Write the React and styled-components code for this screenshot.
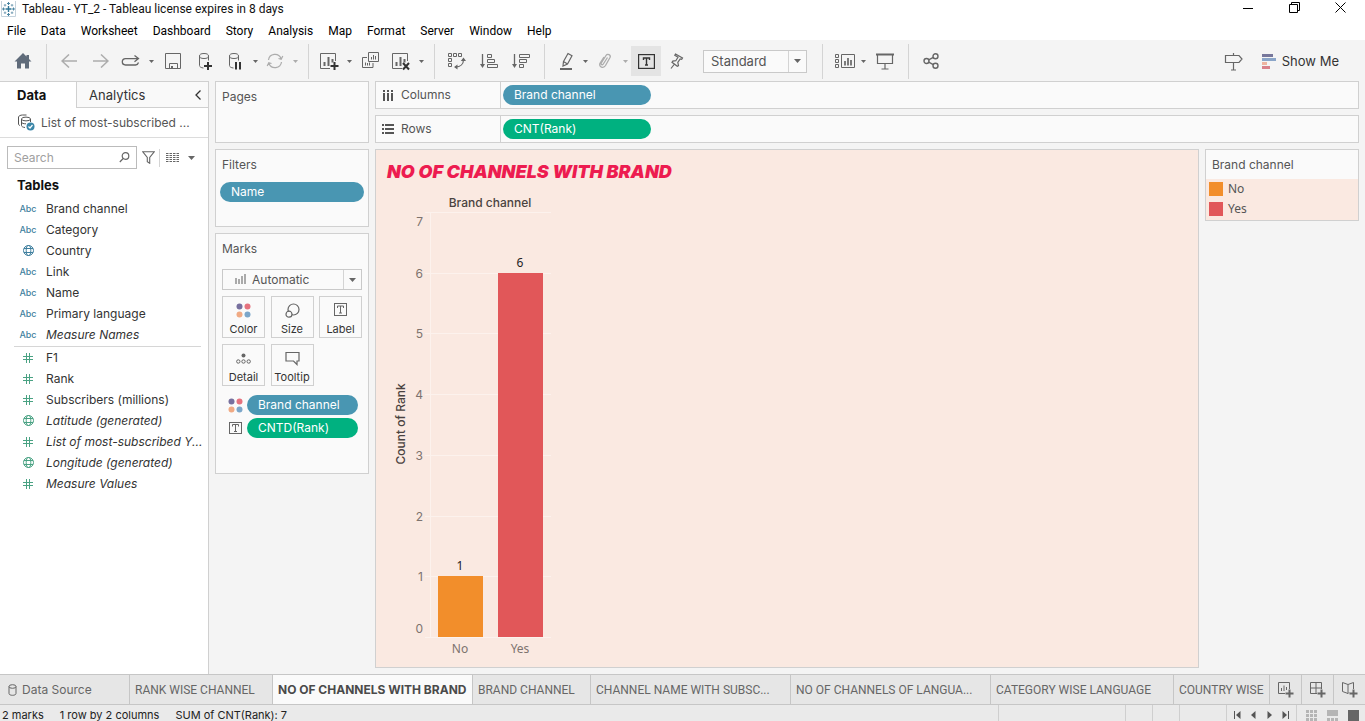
import React from 'react';
import styled, { createGlobalStyle, css } from 'styled-components';

const sans = '"Inter", "Liberation Sans", sans-serif';
const uiSans = '"Noto Sans", "Open Sans", sans-serif';
const chromeSans = '"Roboto", "Liberation Sans", sans-serif';

const Global = createGlobalStyle`
  *, *::before, *::after { box-sizing: border-box; }
  html, body { margin: 0; padding: 0; }
  body { background: #f4f4f4; color: #333; font: 12px/16px ${sans}; overflow: hidden; }
  button, input, select { font: inherit; color: inherit; margin: 0; }
  button { border: 0; padding: 0; background: none; cursor: pointer; }
  svg { display: block; flex: none; }
`;

const Page = styled.div`
  display: flex;
  flex-direction: column;
  height: 100vh;
`;

/* ---------- title bar and menu ---------- */
const TitleBar = styled.header`
  display: flex;
  align-items: center;
  gap: 6px;
  height: 18px;
  flex: none;
  padding: 0 2px 0 1px;
  background: #fff;
  color: #111;
  font: 12px/18px ${chromeSans};
`;
const WindowButtons = styled.div`
  display: flex;
  align-self: flex-start;
  margin-left: auto;
  button { width: 46px; height: 15px; display: flex; align-items: center; justify-content: center; }
`;
const MenuBar = styled.nav`
  display: flex;
  gap: 15px;
  align-items: center;
  height: 22px;
  flex: none;
  padding: 4px 7px 0;
  background: #fff;
  color: #000;
  font: 12px/16px ${chromeSans};
`;

/* ---------- toolbar ---------- */
const ToolBar = styled.div`
  display: flex;
  align-items: center;
  height: 41px;
  flex: none;
  padding: 1px 26px 0 0;
  background: #f4f4f4;
`;
const Group = styled.div`
  display: flex;
  align-items: center;
  height: 35px;
  padding: 0 ${p => p.$end ?? 7}px 0 ${p => p.$start ?? 6}px;
  border-right: ${p => (p.$last ? 0 : '1px solid #d4d4d4')};
`;
const ToolButton = styled.button`
  display: flex;
  align-items: center;
  justify-content: center;
  width: ${p => p.$w ?? 32}px;
  height: 30px;
  color: ${p => (p.$on ? '#333' : '#666')};
  opacity: ${p => (p.disabled ? 0.5 : 1)};
  background: ${p => (p.$on ? '#e4e4e4' : 'none')};
`;
const ShowMe = styled.button`
  display: flex;
  align-items: center;
  gap: 6px;
  color: #333;
  font-size: 13px;
`;
const Spacer = styled.div`flex: 1;`;

const SelectBox = styled.div`
  display: flex;
  align-items: center;
  width: ${p => p.$w ?? '100%'};
  height: ${p => p.$h}px;
  margin-left: ${p => p.$ml ?? 0}px;
  border: 1px solid #c9c9c9;
  background: #fafafa;
  color: #555;
  font-size: ${p => p.$size ?? 12}px;
  select {
    flex: 1;
    min-width: 0;
    height: 100%;
    appearance: none;
    border: 0;
    outline: 0;
    background: none;
    padding: 0 0 0 7px;
  }
`;
const SelectLead = styled.span`
  display: flex;
  padding-left: 12px;
`;
const SelectCaret = styled.span`
  display: flex;
  align-items: center;
  justify-content: center;
  width: 18px;
  height: 100%;
  border-left: 1px solid #d4d4d4;
  pointer-events: none;
`;

/* ---------- body ---------- */
const Body = styled.div`
  display: flex;
  flex: 1;
  min-height: 0;
  gap: 6px;
  padding-right: 6px;
`;
const SidePane = styled.aside`
  width: 209px;
  flex: none;
  background: #fff;
  border-right: 1px solid #d0d0d0;
`;
const PaneTabs = styled.div`
  display: flex;
  height: 27px;
  border-top: 1px solid #d0d0d0;
  font-size: 13px;
`;
const PaneTab = styled.button`
  display: flex;
  align-items: center;
  color: ${p => (p.$active ? '#111' : '#333')};
  font-weight: ${p => (p.$active ? 700 : 400)};
  ${p => p.$active
    ? css`width: 76px; padding-left: 17px;`
    : css`
      flex: 1;
      padding: 0 7px 0 12px;
      justify-content: space-between;
      background: #f9f9f9;
      border-left: 1px solid #d0d0d0;
      border-bottom: 1px solid #d0d0d0;
    `}
`;
const SourceRow = styled.div`
  display: flex;
  align-items: center;
  gap: 6px;
  height: 30px;
  padding: 0 17px;
  border-bottom: 1px solid #dcdcdc;
  color: #555;
  white-space: nowrap;
`;
const SearchRow = styled.div`
  display: flex;
  align-items: center;
  height: 23px;
  margin: 8px 7px 0;
  color: #666;
`;
const SearchBox = styled.label`
  display: flex;
  align-items: center;
  width: 130px;
  height: 23px;
  padding-right: 6px;
  border: 1px solid #bbb;
  input {
    flex: 1;
    min-width: 0;
    border: 0;
    outline: 0;
    padding: 0 6px;
    background: none;
  }
  input::placeholder { color: #a0a0a0; opacity: 1; }
`;
const FilterButton = styled.button`
  display: flex;
  justify-content: center;
  width: 22px;
`;
const ViewButton = styled.button`
  display: flex;
  align-items: center;
  gap: 9px;
  height: 18px;
  padding-left: 6px;
  border-left: 1px solid #d4d4d4;
`;
const TablesTitle = styled.h2`
  margin: 6px 17px 2px;
  font-size: 13px;
  line-height: 21px;
  font-weight: 700;
  color: #111;
`;
const FieldList = styled.ul`
  list-style: none;
  margin: 0 7px 0 14px;
  padding: 0 0 1px;
  border-bottom: ${p => (p.$measures ? 0 : '1px solid #d6d6d6')};
`;
const Field = styled.li`
  display: flex;
  align-items: center;
  height: 21px;
  color: #333;
  white-space: nowrap;
  font-style: ${p => (p.$italic ? 'italic' : 'normal')};
`;
const FieldIcon = styled.span`
  display: flex;
  justify-content: center;
  flex: none;
  width: 28px;
  margin-right: 4px;
  color: ${p => (p.$green ? '#4aa283' : '#3f7f9e')};
  font-size: 9px;
  font-weight: 500;
  font-style: normal;
`;

const Cards = styled.div`
  display: flex;
  flex-direction: column;
  gap: 6px;
  width: 154px;
  flex: none;
`;
const Card = styled.section`
  min-height: ${p => p.$h}px;
  padding: 0 ${p => p.$pad ?? 6}px;
  border: 1px solid #d0d0d0;
  background: #fafafa;
`;
const CardTitle = styled.h3`
  margin: 0;
  padding: 7px 0 0 ${p => p.$indent ?? 0}px;
  font-size: 12px;
  line-height: 16px;
  font-weight: 400;
  color: #555;
`;
const Pill = styled.button`
  width: ${p => p.$w ?? '100%'};
  height: 20px;
  margin-top: ${p => p.$mt ?? 0}px;
  padding: 0 11px;
  border-radius: 10px;
  background: ${p => (p.$green ? '#00b180' : '#4996b2')};
  color: #fff;
  text-align: left;
`;
const MarkType = styled.div`
  margin-top: 12px;
  select { padding-left: 6px; }
`;
const MarkGrid = styled.div`
  display: grid;
  grid-template-columns: repeat(3, 43px);
  grid-auto-rows: 42px;
  justify-content: space-between;
  row-gap: 6px;
  margin: 6px 0 9px;
`;
const MarkButton = styled.button`
  display: flex;
  flex-direction: column;
  align-items: center;
  justify-content: space-between;
  padding: 6px 0 0;
  border: 1px solid #d0d0d0;
  font-size: 11px;
  color: #333;
  svg { color: #666; }
`;
const MarkRow = styled.div`
  display: flex;
  align-items: center;
  gap: 3px;
  height: 20px;
  margin: 0 4px 3px 5px;
`;
const MarkRowIcon = styled.span`
  display: flex;
  justify-content: center;
  flex: none;
  width: 17px;
  color: #666;
`;

const Main = styled.main`
  display: flex;
  flex-direction: column;
  gap: 6px;
  flex: 1;
  min-width: 0;
  padding-bottom: 6px;
`;
const Shelf = styled.div`
  display: flex;
  align-items: center;
  height: 28px;
  flex: none;
  border: 1px solid #d0d0d0;
  background: #fafafa;
`;
const ShelfName = styled.div`
  display: flex;
  align-items: center;
  gap: 7px;
  width: 125px;
  height: 100%;
  margin-right: 2px;
  padding-left: 6px;
  border-right: 1px solid #d0d0d0;
  color: #555;
`;
const SheetRow = styled.div`
  display: flex;
  align-items: flex-start;
  gap: 6px;
  flex: 1;
  min-height: 0;
`;
const Sheet = styled.section`
  flex: 1;
  align-self: stretch;
  padding: 10px 11px;
  border: 1px solid #d0d0d0;
  background: #fae9e1;
`;
const SheetTitle = styled.h1`
  margin: 0 0 6px;
  font: italic 900 18px/24px ${sans};
  color: #ed1c50;
`;
const Legend = styled.section`
  width: 154px;
  flex: none;
  padding-bottom: 1px;
  border: 1px solid #d0d0d0;
  background: #fae9e1;
`;
const LegendTitle = styled.h3`
  margin: 0;
  padding: 0 6px;
  background: #fafafa;
  color: #555;
  font-weight: 400;
  font-size: 12px;
  line-height: 29px;
`;
const LegendItem = styled.div`
  display: flex;
  align-items: center;
  gap: 5px;
  height: 20px;
  padding-left: 3px;
  color: #555;
  font-family: ${uiSans};
  &::before { content: ''; width: 14px; height: 14px; background: ${p => p.$c}; }
`;

/* ---------- sheet tabs and status bar ---------- */
const TabBar = styled.div`
  display: flex;
  height: 31px;
  flex: none;
  border-top: 1px solid #c6c6c6;
  border-bottom: 1px solid #c6c6c6;
  background: #e6e6e6;
  font-family: ${chromeSans};
`;
const TabScroll = styled.div`
  display: flex;
  flex: 1;
  min-width: 0;
  overflow: hidden;
`;
const SheetTab = styled.button`
  display: flex;
  align-items: center;
  gap: 5px;
  width: ${p => p.$w}px;
  flex: none;
  padding: 0 5px 0 ${p => (p.$source ? 8 : 5)}px;
  border-right: 1px solid #c6c6c6;
  background: ${p => (p.$active ? '#fafafa' : 'none')};
  color: ${p => (p.$active ? '#4a4a4a' : '#666')};
  font-family: ${p => (p.$active || p.$source ? sans : 'inherit')};
  font-weight: ${p => (p.$active ? 700 : 400)};
  white-space: nowrap;
`;
const NewTab = styled.button`
  display: flex;
  align-items: center;
  justify-content: center;
  width: 32px;
  color: #666;
  border-left: 1px solid #c6c6c6;
`;
const StatusBar = styled.footer`
  display: flex;
  height: 16px;
  flex: none;
  background: #eaeaea;
  color: #222;
  font-size: 11px;
  line-height: 20px;
`;
const StatusText = styled.div`
  display: flex;
  gap: 16px;
  flex: 1;
  padding-left: 2px;
  overflow: hidden;
  white-space: nowrap;
`;
const StatusCell = styled.div`
  display: flex;
  align-items: center;
  justify-content: space-between;
  width: ${p => p.$w}px;
  border-left: 1px solid #cfcfcf;
  padding: 4px ${p => p.$end ?? 7}px 0 ${p => p.$start ?? 7}px;
  button { color: ${p => p.$c ?? '#555'}; }
`;

/* ---------- icons ---------- */
const Icon = ({ w = 18, h = 18, sw = 1, children }) => (
  <svg width={w} height={h} viewBox={`0 0 ${w} ${h}`} fill="none" stroke="currentColor" strokeWidth={sw} aria-hidden="true">
    {children}
  </svg>
);
const Caret = () => (
  <svg width="7" height="4" viewBox="0 0 7 4" fill="#666" aria-hidden="true"><path d="M0 0h7L3.5 4z" /></svg>
);
const SmallCaret = () => (
  <svg width="5" height="3" viewBox="0 0 5 3" fill="#666" aria-hidden="true"><path d="M0 0h5L2.5 3z" /></svg>
);
const Plus = ({ x, y }) => <path d={`M${x - 4} ${y}h8M${x} ${y - 4}v8`} stroke="#333" strokeWidth="2" />;

const TableauLogo = () => (
  <Icon w={15} h={16}>
    <path d="M.5 0v15.500h14V0" stroke="#c4d2dc" />
    <path d="M7.500 5v6M4.500 8h6" stroke="#2f7596" strokeWidth="1.400" />
    <path d="M7.500 1v3M6 2.500h3M7.500 12v3M6 13.500h3M2.500 6.500v3M1 8h3M12.500 6.500v3M11 8h3" stroke="#4c86a3" />
    <path d="M4 3v2.500M2.800 4.200h2.500M11 3v2.500M9.800 4.200h2.500M4 10.500V13M2.800 11.800h2.500M11 10.500V13M9.800 11.800h2.500" stroke="#6f9ab1" strokeWidth=".9" />
  </Icon>
);
const HomeIcon = () => (
  <Icon w={18} h={16}>
    <path d="M9 0 .5 8.500h2.500V15.500h4v-5h4v5h4V8.500h2.500L15 6V2h-2.500v1.500z" fill="#5f6b7a" stroke="none" />
  </Icon>
);
const Arrow = ({ right }) => (
  <Icon w={16} h={14} sw={1.5}>
    <path d={right ? 'M0 7h15M8 .5 15 7l-7 6.500' : 'M16 7H1M8 .5 1 7l7 6.500'} />
  </Icon>
);
const RedoIcon = () => (
  <Icon w={20} h={12} sw={1.3}>
    <path d="M13 10H4.500a3.200 3.200 0 0 1 0-6.400H17M13.500.5 17.500 3.600l-4 3.200M13 10h1.500a3.500 3.500 0 0 0 3-2.500" />
  </Icon>
);
const SaveIcon = () => (
  <Icon w={16} h={16}>
    <path d="M.5.5h15v15H.5zM4.500 15.500v-5h8v5" />
    <path d="M6 13h2v2.500H6z" fill="currentColor" stroke="none" />
  </Icon>
);
const DbIcon = ({ pause }) => (
  <Icon w={16} h={19}>
    <ellipse cx="7" cy="4" rx="4.500" ry="2.500" />
    <path d="M2.500 4v9.500c0 1.300 1.500 2.300 4 2.500M11.500 4v4.500" />
    {pause ? <path d="M9 10v7.500M13 10v7.500" stroke="#333" strokeWidth="2" /> : <Plus x={11} y={14} />}
  </Icon>
);
const RefreshIcon = () => (
  <Icon w={18} h={16} sw={1.2}>
    <path d="M2.500 7A6.500 6.500 0 0 1 15 5.500M15.500 9A6.500 6.500 0 0 1 3 10.500M12.500 5.500l2.700.700L16.800 3M5.500 10.500l-2.700-.700L1.200 13" />
  </Icon>
);
const SheetIcon = ({ clear }) => (
  <Icon w={20} h={19}>
    <path d="M11 16.500H1.500v-15h15V9" />
    <path d="M5.500 10v4M9.500 5v9M13.500 7v3.500" strokeWidth="2" />
    {clear ? <path d="m12 11 6 6.500M18 11l-6 6.500" stroke="#333" strokeWidth="2" /> : <Plus x={15.5} y={14} />}
  </Icon>
);
const DuplicateIcon = () => (
  <Icon w={18} h={18}>
    <path d="M6.500.5h10v9h-10zM5 5.500H.5v10h10.500V11" />
    <path d="M9.500 5v2.500M11.500 3v4.500M13.500 4v3.500M3.500 10.500v3M5.500 11v2.500M7.500 10.500v3" />
  </Icon>
);
const SwapIcon = () => (
  <Icon w={18} h={18}>
    <path d="M.5 1.500h3v3h-3zM5.500 1.500h3v3h-3zM10.500 1.500h3v3h-3zM.5 6.500h3v3h-3zM.5 11.500h3v3h-3z" />
    <path d="M15.500 7.500c0 4.500-3 7.500-8 7.500" strokeWidth="1.200" />
    <path d="M12.800 9 15.500 5.500 18 9zM9.500 12.500v5L6 15z" fill="currentColor" stroke="none" />
  </Icon>
);
const SortIcon = ({ desc }) => (
  <Icon w={18} h={16}>
    <path d="M2.500 1v12" strokeWidth="1.300" />
    <path d="M0 11h5l-2.500 4z" fill="currentColor" stroke="none" />
    <path d={desc
      ? 'M7.500 1.500h10v3h-10zM7.500 6.500h7v3h-7zM7.500 11.500h4v3h-4z'
      : 'M7.500 1.500h4v3h-4zM7.500 6.500h7v3h-7zM7.500 11.500h10v3h-10z'} />
  </Icon>
);
const HighlightIcon = () => (
  <Icon w={14} h={19}>
    <path d="m3.500 9.500 4.500-8 4 2.200-4.500 8.300-4.500 2zM3.500 9.500l4 2.500" strokeWidth="1.200" />
    <path d="M0 17h12" strokeWidth="2" />
  </Icon>
);
const ClipIcon = () => (
  <Icon w={14} h={16} sw={1.3}>
    <path d="M9.500 4.500 5.300 11c-.8 1.400-2.800.4-2-1L8 2.500c1.500-2.300 5.200-.5 4 2L7.500 12.500c-2 3.300-7 1.500-5.500-2.200L6 4" />
  </Icon>
);
const LabelIcon = ({ w = 17, h = 15 }) => (
  <Icon w={w} h={h} sw={w > 15 ? 1.4 : 1}>
    <rect x=".5" y=".5" width={w - 1} height={h - 1} />
    <path d={`M${w / 2 - 3} ${h / 2 - 1.5}v-2h6v2M${w / 2} ${h / 2 - 3.5}v7M${w / 2 - 1.5} ${h / 2 + 3.5}h3`} />
  </Icon>
);
const PinIcon = () => (
  <Icon w={14} h={16} sw={1.2}>
    <path d="M5.500 1 12.500 5l-.8 1.300-1.500-.3-2.400 3.500.7 3.200-1.200.6L2 9.300l.8-1.200 3-.4 2.200-3.500L4.800 2.300zM4.500 11 1 15.500" />
  </Icon>
);
const FitIcon = () => (
  <Icon w={20} h={16}>
    <path d="M.5 1.500h3v3h-3zM.5 6.500h3v3h-3zM.5 11.500h3v3h-3zM6.500 1.500h13v13h-13z" />
    <path d="M10 8v4.500M13 5v7.500M16 7v5.500" strokeWidth="1.700" />
  </Icon>
);
const PresentIcon = () => (
  <Icon w={18} h={17}>
    <path d="M0 1.500h18" strokeWidth="2" />
    <path d="M1.500 2v8.500h15V2M9 10.500V16M5.500 16h7" strokeWidth="1.200" />
  </Icon>
);
const ShareIcon = () => (
  <Icon w={16} h={16} sw={1.4}>
    <circle cx="3.500" cy="8" r="2.500" /><circle cx="12.500" cy="3.200" r="2.500" /><circle cx="12.500" cy="12.800" r="2.500" />
    <path d="M5.700 6.800l4.600-2.500M5.700 9.200l4.600 2.500" />
  </Icon>
);
const GuideIcon = () => (
  <Icon w={20} h={19} sw={1.2}>
    <path d="M1.500 3.500h13.500l3 3.500-3 3.500H1.500zM9.500 1v2.500M9.500 10.500V18M7 18h5" />
  </Icon>
);
const ShowMeIcon = () => (
  <svg width="14" height="16" viewBox="0 0 14 16" aria-hidden="true">
    <path d="M0 1h11v3H0z" fill="#77779b" /><path d="M0 5h14v3H0z" fill="#8aa5c8" />
    <path d="M0 9h5v3H0z" fill="#eeb49f" /><path d="M0 13h8v3H0z" fill="#d9818a" />
  </svg>
);
const SourceIcon = () => (
  <Icon w={18} h={17}>
    <ellipse cx="9" cy="5" rx="4.500" ry="1.900" />
    <path d="M4.500 5v6.500c0 1 1.500 1.800 3.500 2M13.500 5v3M4.500 8.300c.5 1 2 1.500 4.500 1.500M1.500 10V3c0-1 2-2 4-2h4M1.500 10c0 .8.500 1.200 1.500 1.500" />
    <circle cx="13.500" cy="12.500" r="4" fill="#3b86a8" stroke="none" />
    <path d="m11.500 12.500 1.500 1.500 2.500-3" stroke="#fff" strokeWidth="1.200" />
  </Icon>
);
const SearchIcon = () => (
  <Icon w={11} h={11} sw={1.2}><circle cx="6.500" cy="4" r="3.300" /><path d="M4.200 6.500.8 10" /></Icon>
);
const FunnelIcon = () => (
  <Icon w={13} h={13} sw={1.1}><path d="M.8.8h11.400L7.700 6.500v5.800l-2.400-1.500V6.500z" /></Icon>
);
const ListIcon = () => (
  <Icon w={13} h={9}>
    <path d="M0 .5h13M0 2.500h13M0 4.500h13M0 6.500h13M0 8.500h13" strokeDasharray="2.500 1" />
  </Icon>
);
const GlobeIcon = () => (
  <Icon w={11} h={11}>
    <circle cx="5.500" cy="5.500" r="5" /><ellipse cx="5.500" cy="5.500" rx="2.300" ry="5" /><path d="M1 3.500h9M1 7.500h9" />
  </Icon>
);
const HashIcon = () => (
  <Icon w={10} h={10}><path d="M3.500 0v10M6.500 0v10M0 3.500h10M0 6.500h10" /></Icon>
);
const ColorIcon = () => (
  <svg width="15" height="15" viewBox="0 0 15 15" aria-hidden="true">
    <circle cx="3.500" cy="3.500" r="3" fill="#77709e" /><circle cx="11.500" cy="3.500" r="3" fill="#e5727e" />
    <circle cx="3.500" cy="11.500" r="3" fill="#f0aa84" /><circle cx="11.500" cy="11.500" r="3" fill="#7ba6c9" />
  </svg>
);
const SizeIcon = () => (
  <Icon w={15} h={15} sw={1.2}><circle cx="8.500" cy="6.500" r="5.500" /><circle cx="4" cy="11.200" r="3" fill="#fafafa" /></Icon>
);
const DetailIcon = () => (
  <Icon w={15} h={15}>
    <circle cx="7.500" cy="4.500" r="2" fill="currentColor" stroke="none" />
    <circle cx="2.300" cy="10.500" r="1.700" /><circle cx="7.500" cy="10.500" r="1.700" /><circle cx="12.700" cy="10.500" r="1.700" />
  </Icon>
);
const TooltipIcon = () => (
  <Icon w={15} h={15} sw={1.2}><path d="M1 1.500h13v8.500h-2v3.500L8.500 10H1z" /></Icon>
);
const BarsIcon = () => (
  <svg width="11" height="11" viewBox="0 0 11 11" fill="#aaa" aria-hidden="true"><path d="M0 4h2v6H0zM3 5h2v5H3zM6 2h2v8H6zM9 0h2v10H9z" /></svg>
);
const ColumnsIcon = () => (
  <svg width="12" height="13" viewBox="0 0 12 13" fill="#555" aria-hidden="true">
    <path d="M1 1h2v2H1zM5 1h2v2H5zM9 1h2v2H9zM1 4h2v8H1zM5 4h2v8H5zM9 4h2v8H9z" />
  </svg>
);
const RowsIcon = () => (
  <svg width="12" height="12" viewBox="0 0 12 12" fill="#555" aria-hidden="true">
    <path d="M0 1h2v2H0zM0 5h2v2H0zM0 9h2v2H0zM3 1h9v2H3zM3 5h9v2H3zM3 9h9v2H3z" />
  </svg>
);
const CylinderIcon = () => (
  <Icon w={9} h={12}><ellipse cx="4.500" cy="2.500" rx="3.500" ry="1.800" /><path d="M1 2.500v7c0 2.400 7 2.400 7 0v-7" /></Icon>
);
const NewSheetIcon = ({ kind }) => (
  <Icon w={17} h={17}>
    {kind === 'sheet' && <><path d="M8 12.500H1.500v-11h11V8" /><path d="M4.500 7v3M7 4.500V10M9.500 6v3" /></>}
    {kind === 'dashboard' && <path d="M8 12.500H1.500v-11h11V8M7 1.500v11M1.500 7h11" />}
    {kind === 'story' && <path d="M8 11.500l-1 1-5.500-2v-9L7 3.500l5.500-2V8M7 3.500v9" />}
    <path d="M8.500 12.500h8M12.500 8.500v8" strokeWidth="2" />
  </Icon>
);

/* ---------- chart ---------- */
const ChartText = styled.text`
  font: ${p => p.$size ?? 12}px ${p => (p.$alt ? uiSans : sans)};
  font-weight: ${p => (p.$medium ? 500 : 400)};
  fill: ${p => p.$c ?? '#7d736e'};
  text-anchor: ${p => p.$anchor ?? 'middle'};
`;
const chart = { left: 43, width: 121, base: 447, top: 22, max: 7 };
const yOf = v => Math.round(chart.base - (v * (chart.base - chart.top)) / chart.max);
const bars = [
  { name: 'No', value: 1, color: '#f28e2b' },
  { name: 'Yes', value: 6, color: '#e15759' },
];
const axisText = v => {
  if (v === 0) return yOf(0) - 4;
  if (v === chart.max) return yOf(v) + 14;
  return yOf(v) + 5;
};
const BarChart = () => (
  <svg width="170" height="470" viewBox="0 0 170 470" role="img" aria-label="Count of Rank by Brand channel">
    <ChartText x="103" y="17" $c="#4a4340" $medium>Brand channel</ChartText>
    <ChartText transform="rotate(-90 18 234)" x="18" y="234" $c="#4a4340" $medium>Count of Rank</ChartText>
    {[0, 1, 2, 3, 4, 5, 6, 7].map(v => (
      <g key={v}>
        <path d={`M${chart.left - 5} ${yOf(v) + 0.5}H${chart.left + chart.width}`} stroke="#fcf2ed" />
        <ChartText x="36" y={axisText(v)} $anchor="end">{v}</ChartText>
      </g>
    ))}
    <path d={`M${chart.left + 0.5} ${chart.top}V${chart.base}`} stroke="#fcf2ed" />
    {bars.map((b, i) => {
      const x = chart.left + 8 + i * 60;
      return (
        <g key={b.name}>
          <rect x={x} y={yOf(b.value)} width="45" height={chart.base - yOf(b.value)} fill={b.color} />
          <ChartText x={x + 22} y={yOf(b.value) - 6} $c="#222" $alt>{b.value}</ChartText>
          <ChartText x={x + 22} y={chart.base + 16} $alt>{b.name}</ChartText>
        </g>
      );
    })}
  </svg>
);

const menus = ['File', 'Data', 'Worksheet', 'Dashboard', 'Story', 'Analysis', 'Map', 'Format', 'Server', 'Window', 'Help'];
const dimensions = [
  ['abc', 'Brand channel'], ['abc', 'Category'], ['geo', 'Country'], ['abc', 'Link'],
  ['abc', 'Name'], ['abc', 'Primary language'], ['abc', 'Measure Names', true],
];
const measures = [
  ['num', 'F1'], ['num', 'Rank'], ['num', 'Subscribers (millions)'], ['geo', 'Latitude (generated)', true],
  ['num', 'List of most-subscribed Y...', true], ['geo', 'Longitude (generated)', true], ['num', 'Measure Values', true],
];
const sheets = [
  ['RANK WISE CHANNEL', 143], ['NO OF CHANNELS WITH BRAND', 200, true], ['BRAND CHANNEL', 118],
  ['CHANNEL NAME WITH SUBSC...', 200], ['NO OF CHANNELS OF LANGUA...', 200],
  ['CATEGORY WISE LANGUAGE', 183], ['COUNTRY WISE', 143],
];

const Fields = ({ items, green }) => (
  <FieldList $measures={green}>
    {items.map(([type, name, italic]) => (
      <Field key={name} $italic={italic}>
        <FieldIcon $green={green}>
          {type === 'abc' ? 'Abc' : type === 'geo' ? <GlobeIcon /> : <HashIcon />}
        </FieldIcon>
        {name}
      </Field>
    ))}
  </FieldList>
);

const Drop = ({ disabled, label }) => (
  <ToolButton $w={12} disabled={disabled} aria-label={label}><SmallCaret /></ToolButton>
);

export default function App() {
  return (
    <Page>
      <Global />
      <TitleBar>
        <TableauLogo />
        <span>Tableau - YT_2 - Tableau license expires in 8 days</span>
        <WindowButtons>
          <button aria-label="Minimize"><Icon w={10} h={10}><path d="M0 5.500h10" stroke="#000" /></Icon></button>
          <button aria-label="Restore"><Icon w={11} h={11}><path d="M.5 2.500h8v8h-8zM2.500 2.500v-2h8v8h-2" stroke="#000" /></Icon></button>
          <button aria-label="Close"><Icon w={11} h={11}><path d="m.5.5 10 10M10.500.5l-10 10" stroke="#000" /></Icon></button>
        </WindowButtons>
      </TitleBar>
      <MenuBar>{menus.map(m => <button key={m}>{m}</button>)}</MenuBar>

      <ToolBar>
        <Group $start={7}><ToolButton aria-label="Start page"><HomeIcon /></ToolButton></Group>
        <Group>
          <ToolButton aria-label="Undo" disabled><Arrow /></ToolButton>
          <ToolButton aria-label="Redo" disabled><Arrow right /></ToolButton>
          <ToolButton $w={28} aria-label="Replay animation"><RedoIcon /></ToolButton>
          <Drop label="Replay speed" />
          <ToolButton aria-label="Save"><SaveIcon /></ToolButton>
          <ToolButton aria-label="New data source"><DbIcon /></ToolButton>
          <ToolButton $w={28} aria-label="Pause auto updates"><DbIcon pause /></ToolButton>
          <Drop label="Update options" />
          <ToolButton $w={28} aria-label="Run update" disabled><RefreshIcon /></ToolButton>
          <Drop label="Run options" disabled />
        </Group>
        <Group>
          <ToolButton $w={28} aria-label="New worksheet"><SheetIcon /></ToolButton>
          <Drop label="New options" />
          <ToolButton aria-label="Duplicate"><DuplicateIcon /></ToolButton>
          <ToolButton $w={28} aria-label="Clear sheet"><SheetIcon clear /></ToolButton>
          <Drop label="Clear options" />
        </Group>
        <Group>
          <ToolButton aria-label="Swap rows and columns"><SwapIcon /></ToolButton>
          <ToolButton aria-label="Sort ascending"><SortIcon /></ToolButton>
          <ToolButton aria-label="Sort descending"><SortIcon desc /></ToolButton>
        </Group>
        <Group $start={10} $end={15}>
          <ToolButton $w={24} aria-label="Highlight"><HighlightIcon /></ToolButton>
          <Drop label="Highlight options" />
          <ToolButton $w={28} aria-label="Group members" disabled><ClipIcon /></ToolButton>
          <Drop label="Group options" disabled />
          <ToolButton $w={30} $on aria-label="Show mark labels"><LabelIcon /></ToolButton>
          <ToolButton aria-label="Fix axes"><PinIcon /></ToolButton>
          <SelectBox $w="104px" $h={23} $ml={10} $size={13}>
            <select aria-label="Fit" defaultValue="Standard"><option>Standard</option><option>Entire View</option></select>
            <SelectCaret><Caret /></SelectCaret>
          </SelectBox>
        </Group>
        <Group $start={10}>
          <ToolButton $w={24} aria-label="Show or hide cards"><FitIcon /></ToolButton>
          <Drop label="Card options" />
          <ToolButton aria-label="Presentation mode"><PresentIcon /></ToolButton>
        </Group>
        <Group $last><ToolButton aria-label="Share"><ShareIcon /></ToolButton></Group>
        <Spacer />
        <ToolButton $w={56} aria-label="Guide"><GuideIcon /></ToolButton>
        <ShowMe><ShowMeIcon />Show Me</ShowMe>
      </ToolBar>

      <Body>
        <SidePane>
          <PaneTabs>
            <PaneTab $active>Data</PaneTab>
            <PaneTab>Analytics<Icon w={6} h={10} sw={1.3}><path d="M5.500.5 1 5l4.500 4.500" /></Icon></PaneTab>
          </PaneTabs>
          <SourceRow><SourceIcon />List of most-subscribed ...</SourceRow>
          <SearchRow>
            <SearchBox><input type="text" placeholder="Search" aria-label="Search" /><SearchIcon /></SearchBox>
            <FilterButton aria-label="Filter fields"><FunnelIcon /></FilterButton>
            <ViewButton aria-label="View options"><ListIcon /><Caret /></ViewButton>
          </SearchRow>
          <TablesTitle>Tables</TablesTitle>
          <Fields items={dimensions} />
          <Fields items={measures} green />
        </SidePane>

        <Cards>
          <Card $h={62}><CardTitle>Pages</CardTitle></Card>
          <Card $h={78} $pad={4}>
            <CardTitle $indent={2}>Filters</CardTitle>
            <Pill $mt={9}>Name</Pill>
          </Card>
          <Card $h={241}>
            <CardTitle>Marks</CardTitle>
            <MarkType>
              <SelectBox $h={21}>
                <SelectLead><BarsIcon /></SelectLead>
                <select aria-label="Mark type" defaultValue="Automatic"><option>Automatic</option><option>Bar</option></select>
                <SelectCaret><Caret /></SelectCaret>
              </SelectBox>
            </MarkType>
            <MarkGrid>
              <MarkButton><ColorIcon />Color</MarkButton>
              <MarkButton><SizeIcon />Size</MarkButton>
              <MarkButton><LabelIcon w={13} h={13} />Label</MarkButton>
              <MarkButton><DetailIcon />Detail</MarkButton>
              <MarkButton><TooltipIcon />Tooltip</MarkButton>
            </MarkGrid>
            <MarkRow><MarkRowIcon><ColorIcon /></MarkRowIcon><Pill>Brand channel</Pill></MarkRow>
            <MarkRow><MarkRowIcon><LabelIcon w={13} h={12} /></MarkRowIcon><Pill $green>CNTD(Rank)</Pill></MarkRow>
          </Card>
        </Cards>

        <Main>
          <Shelf><ShelfName><ColumnsIcon />Columns</ShelfName><Pill $w="148px">Brand channel</Pill></Shelf>
          <Shelf><ShelfName><RowsIcon />Rows</ShelfName><Pill $w="148px" $green>CNT(Rank)</Pill></Shelf>
          <SheetRow>
            <Sheet>
              <SheetTitle>NO OF CHANNELS WITH BRAND</SheetTitle>
              <BarChart />
            </Sheet>
            <Legend>
              <LegendTitle>Brand channel</LegendTitle>
              <LegendItem $c="#f28e2b">No</LegendItem>
              <LegendItem $c="#e15759">Yes</LegendItem>
            </Legend>
          </SheetRow>
        </Main>
      </Body>

      <TabBar>
        <SheetTab $w={130} $source><CylinderIcon />Data Source</SheetTab>
        <TabScroll>
          {sheets.map(([name, w, active]) => <SheetTab key={name} $w={w} $active={active}>{name}</SheetTab>)}
        </TabScroll>
        <NewTab aria-label="New worksheet"><NewSheetIcon kind="sheet" /></NewTab>
        <NewTab aria-label="New dashboard"><NewSheetIcon kind="dashboard" /></NewTab>
        <NewTab aria-label="New story"><NewSheetIcon kind="story" /></NewTab>
      </TabBar>
      <StatusBar>
        <StatusText><span>2 marks</span><span>1 row by 2 columns</span><span>SUM of CNT(Rank): 7</span></StatusText>
        <StatusCell $w={127} />
        <StatusCell $w={27} />
        <StatusCell $w={27} />
        <StatusCell $w={47} />
        <StatusCell $w={70}>
          <button aria-label="First"><Icon w={7} h={8}><path d="M6.500 0v8L2 4z" fill="currentColor" stroke="none" /><path d="M.5 0v8" /></Icon></button>
          <button aria-label="Previous"><Icon w={7} h={8}><path d="M5.500 0v8L1 4z" fill="currentColor" stroke="none" /></Icon></button>
          <button aria-label="Next"><Icon w={7} h={8}><path d="M1.500 0v8L6 4z" fill="currentColor" stroke="none" /></Icon></button>
          <button aria-label="Last"><Icon w={7} h={8}><path d="M.5 0v8L5 4z" fill="currentColor" stroke="none" /><path d="M6.500 0v8" /></Icon></button>
        </StatusCell>
        <StatusCell $w={69} $start={9} $end={6} $c="#b5b5b5">
          <button aria-label="Show tabs"><Icon w={11} h={11} sw={3}><path d="M0 1.500h11M0 5.500h11M0 9.500h11" strokeDasharray="3 1" /></Icon></button>
          <button aria-label="Show filmstrip"><Icon w={11} h={11}><path d="M0 0h11v6H0zM0 8h3v3H0zM4 8h3v3H4zM8 8h3v3H8z" fill="currentColor" stroke="none" /></Icon></button>
          <button aria-label="Show sheet sorter"><Icon w={11} h={11}><path d="M0 0h11v11H0z" fill="#666" stroke="none" /></Icon></button>
        </StatusCell>
      </StatusBar>
    </Page>
  );
}
